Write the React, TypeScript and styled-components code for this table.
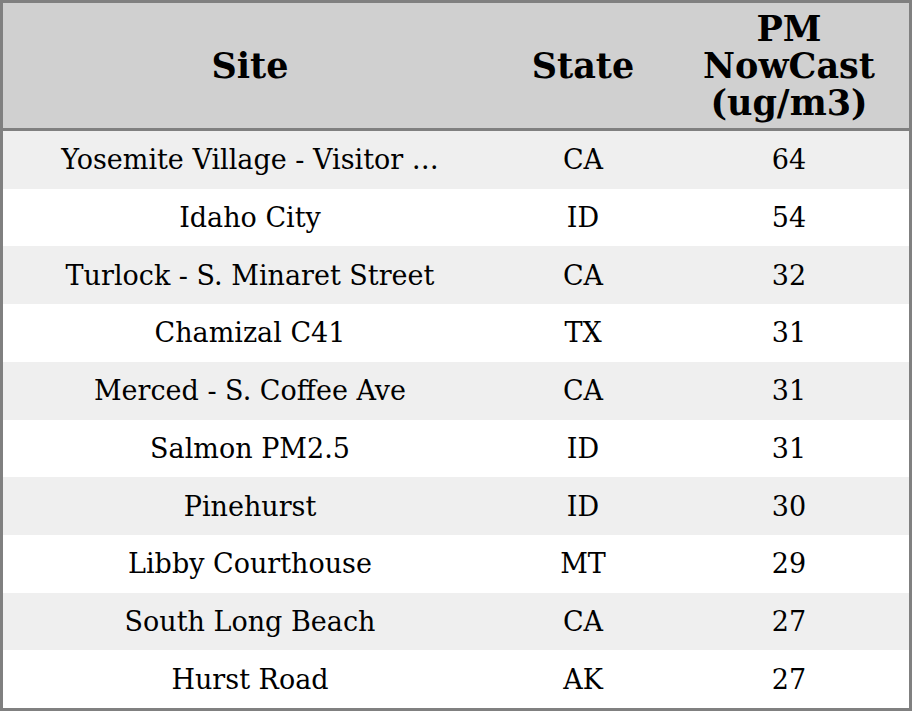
import React from 'react';
import styled, { createGlobalStyle } from 'styled-components';

const GlobalStyle = createGlobalStyle`
  html, body {
    margin: 0;
    padding: 0;
    background: #ffffff;
  }
  body {
    font-family: "DejaVu Serif", "Liberation Serif", serif;
  }
`;

const COLUMNS = '494px 172px 240px';

const Table = styled.div`
  width: 912px;
  height: 711px;
  box-sizing: border-box;
  border: 3px solid #808080;
  display: flex;
  flex-direction: column;
  color: #000;
`;

const HeaderRow = styled.div`
  display: grid;
  grid-template-columns: ${COLUMNS};
  height: 125px;
  background: #d0d0d0;
  border-bottom: 3px solid #808080;
  flex-shrink: 0;
`;

const HeaderCell = styled.div`
  display: flex;
  align-items: center;
  justify-content: center;
  text-align: center;
  font-weight: bold;
  font-size: 35px;
  line-height: 37px;
`;

const Body = styled.div`
  flex: 1;
  display: flex;
  flex-direction: column;
`;

const Row = styled.div<{ $shaded: boolean }>`
  flex: 1;
  display: grid;
  grid-template-columns: ${COLUMNS};
  background: ${props => (props.$shaded ? '#efefef' : '#ffffff')};
`;

const Cell = styled.div`
  display: flex;
  align-items: center;
  justify-content: center;
  font-size: 27px;
  white-space: nowrap;
`;

const rows = [
  ['Yosemite Village - Visitor \u2026', 'CA', '64'],
  ['Idaho City', 'ID', '54'],
  ['Turlock - S. Minaret Street', 'CA', '32'],
  ['Chamizal C41', 'TX', '31'],
  ['Merced - S. Coffee Ave', 'CA', '31'],
  ['Salmon PM2.5', 'ID', '31'],
  ['Pinehurst', 'ID', '30'],
  ['Libby Courthouse', 'MT', '29'],
  ['South Long Beach', 'CA', '27'],
  ['Hurst Road', 'AK', '27'],
];

export default function App() {
  return (
    <>
      <GlobalStyle />
      <Table>
        <HeaderRow>
          <HeaderCell>Site</HeaderCell>
          <HeaderCell>State</HeaderCell>
          <HeaderCell>
            PM
            <br />
            NowCast
            <br />
            (ug/m3)
          </HeaderCell>
        </HeaderRow>
        <Body>
          {rows.map(([site, state, value], i) => (
            <Row key={site} $shaded={i % 2 === 0}>
              <Cell>{site}</Cell>
              <Cell>{state}</Cell>
              <Cell>{value}</Cell>
            </Row>
          ))}
        </Body>
      </Table>
    </>
  );
}
